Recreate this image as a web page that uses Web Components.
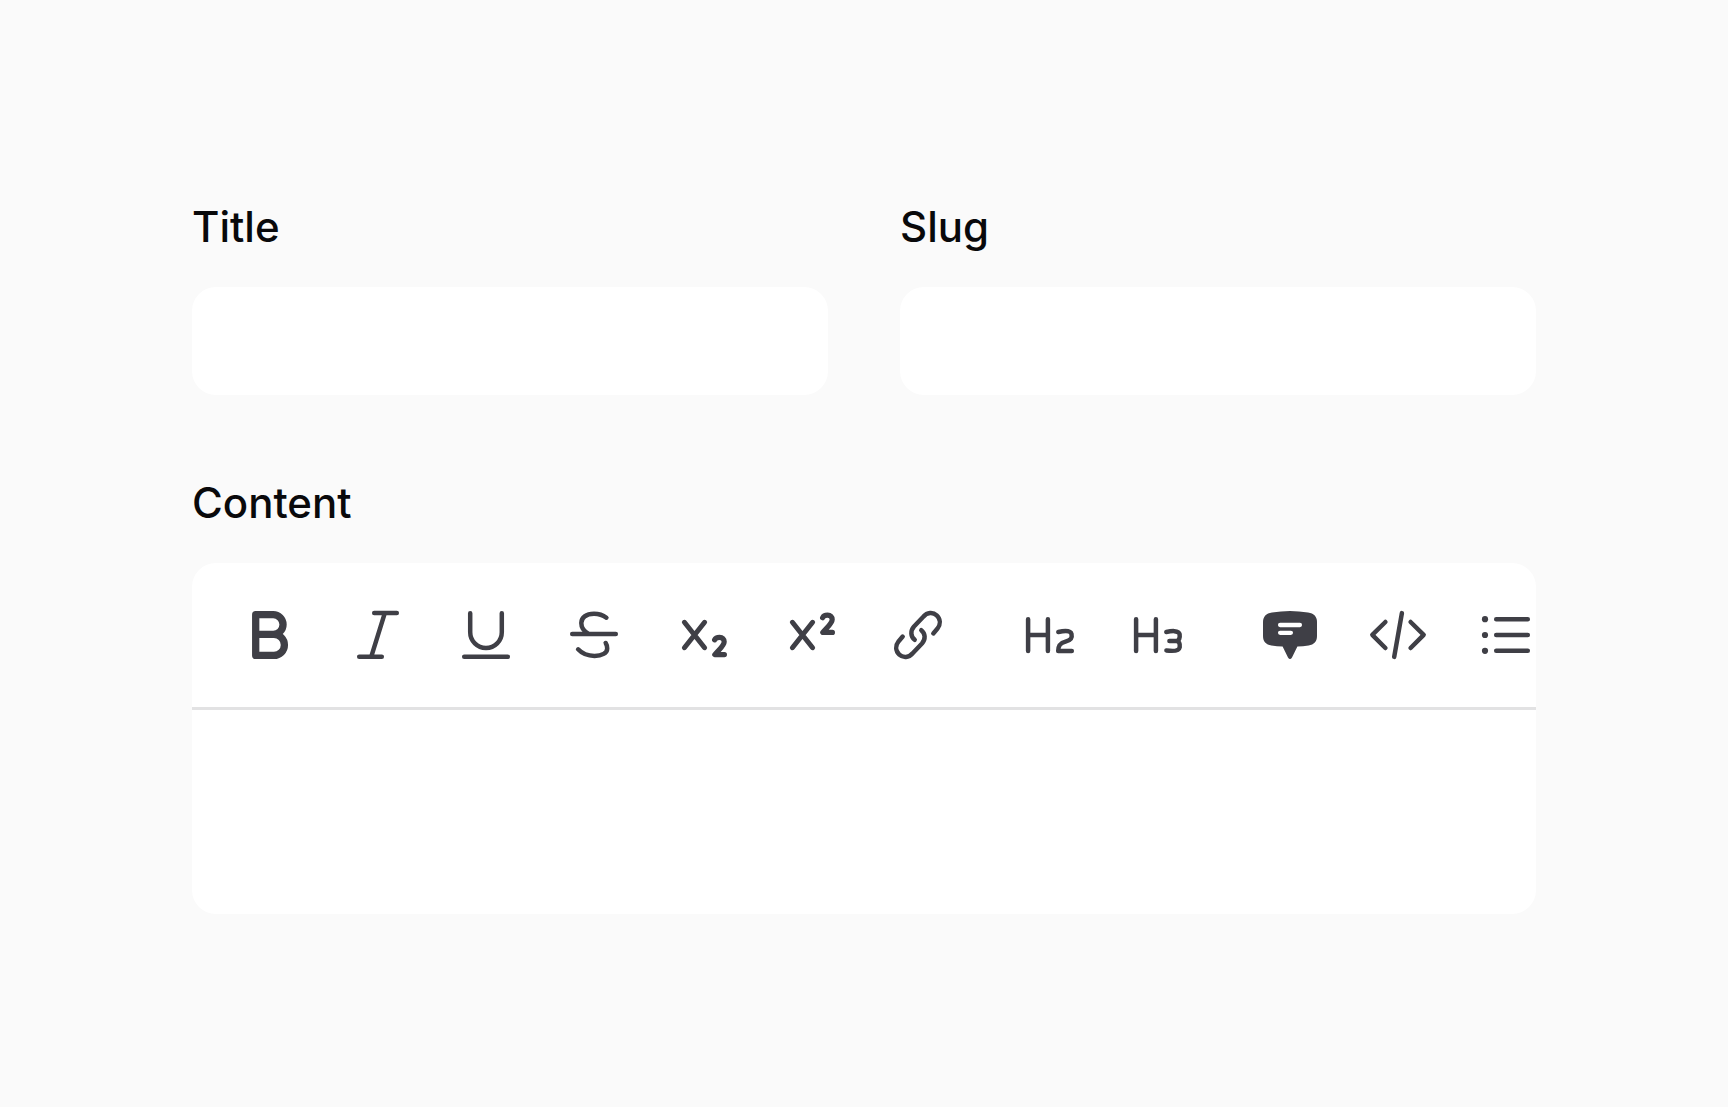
<!DOCTYPE html>
<html lang="en">
<head>
<meta charset="utf-8">
<title>Post form</title>
<style>
  html, body { margin: 0; height: 100%; }
  body { background: #fafafa; font-family: Inter, "Liberation Sans", sans-serif; color: #09090b; overflow: hidden; }
</style>
</head>
<body>
<post-form>
  <form-field label="Title"><text-input label="Title"></text-input></form-field>
  <form-field label="Slug"><text-input label="Slug"></text-input></form-field>
  <form-field label="Content" wide>
    <rich-editor>
      <tool-group slot="tools">
        <tool-button icon="bold"></tool-button>
        <tool-button icon="italic"></tool-button>
        <tool-button icon="underline"></tool-button>
        <tool-button icon="strike"></tool-button>
        <tool-button icon="subscript"></tool-button>
        <tool-button icon="superscript"></tool-button>
        <tool-button icon="link"></tool-button>
      </tool-group>
      <tool-group slot="tools">
        <tool-button icon="h2"></tool-button>
        <tool-button icon="h3"></tool-button>
      </tool-group>
      <tool-group slot="tools">
        <tool-button icon="quote"></tool-button>
        <tool-button icon="code"></tool-button>
        <tool-button icon="list"></tool-button>
      </tool-group>
    </rich-editor>
  </form-field>
</post-form>
<script>
  const define = (name, render) => customElements.define(name, class extends HTMLElement {
    connectedCallback() {
      if (!this.shadowRoot) this.attachShadow({ mode: 'open' }).innerHTML = render(this);
    }
  });

  const SUB_TWO = 'M42.6 34.9C43.4 33.1 45.2 32.3 47.6 32.3C50.4 32.3 52.2 34.2 52.2 36.7C52.2 40.4 48 43.5 42.8 49.6H52.4';
  const CROSS = '<path stroke-width="5" d="M12.4 17.3L32.6 42.7M32.6 17.3L12.4 42.7"/>';
  const HALF_LINK = 'M26.7 34.8C22.6 31.5 22.2 25.8 26 21.5L35.3 11.8C39.2 7.2 45 7 48.7 10.4C52.6 14 52.8 19.4 49.3 23.8L45.3 28.4';
  const H = 'M8.1 14.2V45.9M27.9 14.2V45.9M8.1 30H27.9';
  const ICONS = {
    bold: '<path stroke-width="7.3" d="M15.7 9.7H33.2A9.85 9.85 0 0 1 33.2 29.4H15.7M33.2 29.4H33.9A10.5 10.5 0 0 1 33.9 50.4H15.7V9.7"/>',
    italic: '<path d="M26.2 8.1H48.8M11.2 51.8H33.8M36.8 8.1L23.2 51.8"/>',
    underline: '<path d="M14.2 8.2V27.2A15.8 15.8 0 0 0 45.8 27.2V8.2M8.2 51.8H51.8"/>',
    strike: '<path d="M8.2 29H51.8M42.4 12.7C38.6 9.8 34.2 8.7 30 8.7C22 8.7 17.3 12.7 17.3 18C17.3 22.5 20 26.5 24.8 28.9M14.1 44.3C18 48.5 24 50.9 30.5 50.9C38 50.9 43.2 48 43.2 43.4C43.2 41.3 42.7 39.6 41.7 38"/>',
    subscript: CROSS + `<path stroke-width="5.2" d="${SUB_TWO}"/>`,
    superscript: CROSS + `<path stroke-width="5.2" transform="translate(0 -22.2)" d="${SUB_TWO}"/>`,
    link: `<path d="${HALF_LINK}"/><path transform="rotate(180 30 30)" d="${HALF_LINK}"/>`,
    h2: `<path d="${H}M38.3 27C43 26 50.4 25 51.5 29C52.6 33.5 50.3 35.4 45.5 36.6C40.5 37.9 38.2 40.3 38.2 45.9H51.8"/>`,
    h3: `<path d="${H}M38.3 27C43 26 50.8 25 51.6 29.2C52.2 33 50.9 35.8 48.4 35.9H41.4M48.4 35.9C50.9 36 52.2 38.6 51.7 42.2C51 46.8 43 46 38.4 45.4"/>`,
    quote: '<path fill="currentColor" stroke="none" d="M12 7.5Q30 4.5 48 7.5C54 8.4 57 11.7 57 17V31C57 36.4 54 39.7 48.6 40.4C45 41 41 41.3 37.4 41.4L32 52.6Q30 55.6 28 52.6L22.6 41.4C19 41.3 15 41 11.4 40.4C6 39.7 3 36.4 3 31V17C3 11.7 6 8.4 12 7.5Z"/><path stroke="#fff" stroke-width="4.3" d="M20.1 20H39.9M20.1 27.8H30.9"/>',
    code: '<path d="M17.4 17L4.3 29.8L17.4 43M42.6 17L55.7 29.8L42.6 43M33.9 8.1L26.2 51.9"/>',
    list: '<path d="M20.2 14.2H51.8M20.2 30H51.8M20.2 45.8H51.8"/><g fill="currentColor" stroke="none"><circle cx="9" cy="14.2" r="3.1"/><circle cx="9" cy="30" r="3.1"/><circle cx="9" cy="45.8" r="3.1"/></g>'
  };

  define('post-form', () => `
    <style>
      :host { display: grid; grid-template-columns: 1fr 1fr; gap: 72px; padding: 191px 192px 0; }
    </style><slot></slot>`);

  define('form-field', el => `
    <style>
      :host { display: flex; flex-direction: column; gap: 24px; min-width: 0; }
      :host([wide]) { grid-column: 1 / -1; }
      .label { font-size: 42px; line-height: 72px; font-weight: 500; }
    </style>
    <div class="label">${el.getAttribute('label')}</div><slot></slot>`);

  define('text-input', el => `
    <style>
      :host { display: block; height: 108px; }
      input { display: block; box-sizing: border-box; width: 100%; height: 100%; border: 0; border-radius: 24px;
        padding: 0 36px; background: #fff; font: inherit; font-size: 42px; color: inherit; outline: none; }
    </style>
    <input type="text" aria-label="${el.getAttribute('label')}">`);

  define('rich-editor', () => `
    <style>
      :host { display: flex; flex-direction: column; height: 351px; border-radius: 24px; background: #fff; overflow: hidden; }
      .bar { display: flex; flex: none; gap: 24px; height: 144px; padding-left: 24px; align-items: center; border-bottom: 3px solid #e2e2e3; }
      .area { flex: 1; outline: none; }
    </style>
    <div class="bar"><slot name="tools"></slot></div><div class="area" contenteditable="true"></div>`);

  define('tool-group', () => `
    <style>:host { display: flex; flex: none; }</style><slot></slot>`);

  define('tool-button', el => `
    <style>
      :host { display: block; flex: none; width: 108px; height: 108px; }
      button { display: flex; align-items: center; justify-content: center; width: 100%; height: 100%;
        padding: 0; border: 0; background: none; color: #3f3f46; }
      svg { display: block; width: 60px; height: 60px; }
    </style>
    <button type="button" aria-label="${el.getAttribute('icon')}">
      <svg viewBox="0 0 60 60" fill="none" stroke="currentColor" stroke-width="4.5" stroke-linecap="round" stroke-linejoin="round">${ICONS[el.getAttribute('icon')]}</svg>
    </button>`);
</script>
</body>
</html>
